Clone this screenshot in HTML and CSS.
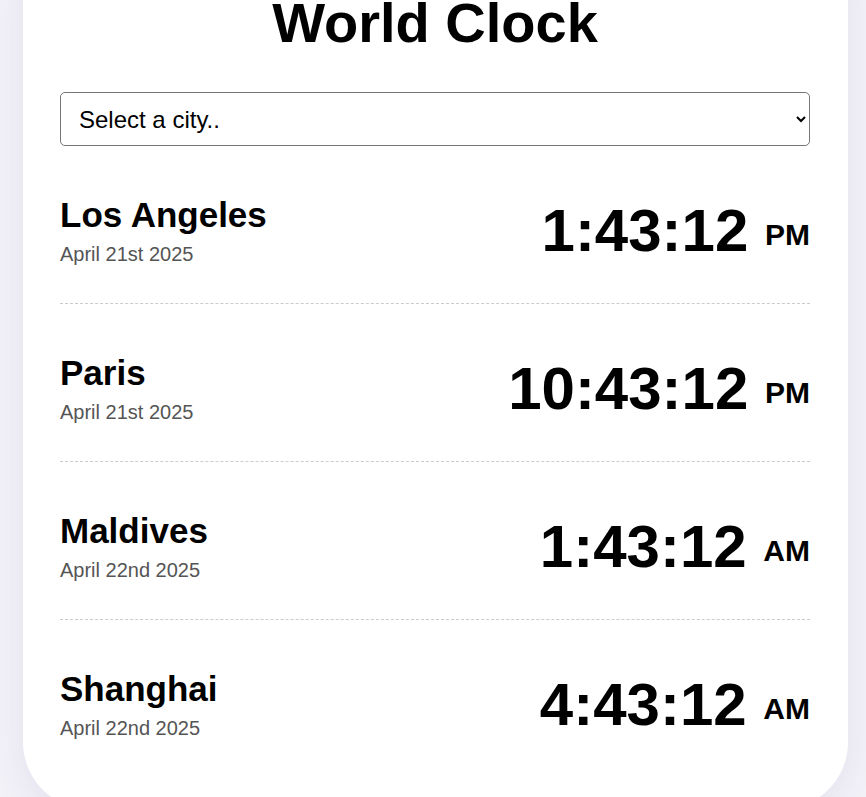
FILE: index.html
```html
<!DOCTYPE html>
<html lang="en">
<head>
<meta charset="utf-8">
<title>World Clock</title>
<link rel="stylesheet" href="styles.css">
</head>
<body>
<div class="page">
  <main class="card">
    <h1 class="title">World Clock</h1>
    <select class="city-select">
      <option>Select a city..</option>
      <option>Tokyo</option>
      <option>Sydney</option>
    </select>
    <div class="cities">
      <div class="city">
        <div class="city-info">
          <h2 class="city-name">Los Angeles</h2>
          <div class="city-date">April 21st 2025</div>
        </div>
        <div class="city-time">1:43:12 <small class="meridiem">PM</small></div>
      </div>
      <div class="city">
        <div class="city-info">
          <h2 class="city-name">Paris</h2>
          <div class="city-date">April 21st 2025</div>
        </div>
        <div class="city-time">10:43:12 <small class="meridiem">PM</small></div>
      </div>
      <div class="city">
        <div class="city-info">
          <h2 class="city-name">Maldives</h2>
          <div class="city-date">April 22nd 2025</div>
        </div>
        <div class="city-time">1:43:12 <small class="meridiem">AM</small></div>
      </div>
      <div class="city">
        <div class="city-info">
          <h2 class="city-name">Shanghai</h2>
          <div class="city-date">April 22nd 2025</div>
        </div>
        <div class="city-time">4:43:12 <small class="meridiem">AM</small></div>
      </div>
    </div>
  </main>
</div>
</body>
</html>
```
FILE: styles.css
```css
html, body {
  margin: 0;
}

body {
  background: #f3f2f8;
  font-family: "Liberation Sans", Arial, sans-serif;
  color: #000;
}

.page {
  padding-left: 23px;
  width: 825px;
}

.card {
  display: block;
  background: #fff;
  margin-top: -80px;
  padding: 71px 38px 33px 37px;
  border-radius: 68px;
  box-shadow: 0 10px 40px rgba(70, 60, 140, 0.09);
}

.title {
  font-size: 56px;
  font-weight: 700;
  text-align: center;
  line-height: 64px;
  margin: 0 0 37px;
}

.city-select {
  display: block;
  box-sizing: border-box;
  width: 100%;
  height: 54px;
  font-family: "Liberation Sans", Arial, sans-serif;
  font-size: 24px;
  color: #000;
  background: #fff;
  border: 1px solid #767676;
  border-radius: 5px;
  padding: 0 16px 0 14px;
  margin: 0;
}

.city {
  display: flex;
  justify-content: space-between;
  align-items: center;
  padding: 49px 0 37px;
  border-bottom: 1px dashed #cccccc;
}

.city:last-child {
  border-bottom: none;
}

.city-name {
  font-size: 35px;
  font-weight: 700;
  line-height: 40px;
  margin: 0 0 8px;
}

.city-date {
  font-size: 20px;
  line-height: 23px;
  color: #555;
}

.city-time {
  font-size: 60px;
  font-weight: 700;
  line-height: 69px;
}

.meridiem {
  font-size: 30px;
  line-height: 34px;
  vertical-align: middle;
}
```
